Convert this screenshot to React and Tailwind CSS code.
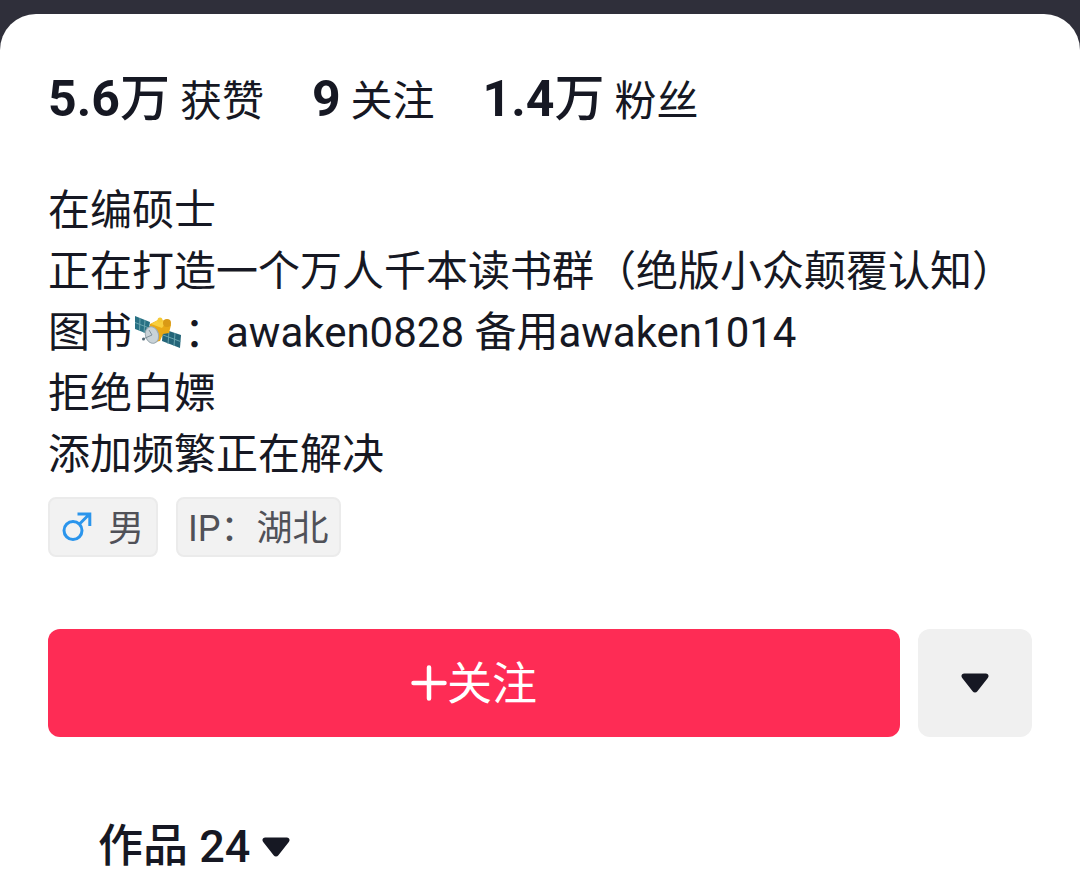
const stats = [
  { value: '5.6', unit: '万', label: '获赞' },
  { value: '9', unit: '', label: '关注' },
  { value: '1.4', unit: '万', label: '粉丝' },
]

function CaretDown() {
  return (
    <svg width="28" height="20" viewBox="0 0 28 20" fill="currentColor" aria-hidden="true">
      <path d="M3.2 0.5h21.6c2.4 0 3.6 2.6 2 4.4L16.4 18.2c-1.3 1.6-3.5 1.6-4.8 0L1.2 4.9C-.4 3.1.8.5 3.2.5z" />
    </svg>
  )
}

function MaleIcon() {
  return (
    <svg width="30" height="30" viewBox="0 0 30 30" fill="none" stroke="#2b95ec" strokeWidth="3" aria-hidden="true">
      <circle cx="11" cy="18.5" r="9" />
      <path d="M17.5 12L27 2.5M15.5 2h12.3v12" />
    </svg>
  )
}

function PlusIcon() {
  return (
    <svg width="36" height="36" viewBox="0 0 36 36" fill="none" stroke="currentColor" strokeWidth="4.5" strokeLinecap="round" aria-hidden="true">
      <path d="M18 2.5v31M2.5 18h31" />
    </svg>
  )
}

function Satellite() {
  return (
    <svg className="mx-px inline-block align-[-4px]" width="50" height="36" viewBox="0 0 50 36" role="img" aria-label="卫星">
      <path d="M14 11l22 12" stroke="#a8872d" strokeWidth="2" />
      {/* solar panels */}
      <path d="M2 1l15 6-2 12L2 14z" fill="#287184" />
      <path d="M2 7.5l14 5.5M7 3L6.5 16M12 5l-1 13" stroke="#6ba6b0" strokeWidth="1" fill="none" />
      <path d="M30 14l18 6-1 13-18-7z" fill="#246579" />
      <path d="M30 20l17.5 6.5M36 16l-1 13M42 18l-1 13" stroke="#6ba6b0" strokeWidth="1" fill="none" />
      {/* body */}
      <path d="M17 9l8-4 10 1 3 4-2 8-6 1-3 7-5 1-5-8z" fill="#e9a916" />
      <path d="M18 9l7-4 9 1-5 7z" fill="#f8cf3e" />
      <ellipse cx="34" cy="8" rx="4" ry="4" fill="#d99a16" />
      <circle cx="27" cy="5" r="2.5" fill="#f5ca35" />
      {/* dish */}
      <ellipse cx="19" cy="20" rx="6.5" ry="8.5" transform="rotate(-18 19 20)" fill="#c9d3d8" stroke="#9aa8af" strokeWidth="1" />
      <path d="M10 24l9-4M19 20l-3-5" stroke="#81919a" strokeWidth="1" />
      <circle cx="10.5" cy="24" r="1.5" fill="#526775" />
    </svg>
  )
}

function App() {
  return (
    <div className="bg-[#2f2f3a] pt-[14px] font-[Roboto,'Noto_Sans_CJK_SC',sans-serif] text-[#161823]" lang="zh-CN">
      <main className="rounded-t-[36px] bg-white px-12 pt-[50px] pb-4">
        <ul className="flex h-[72px] items-center gap-12">
          {stats.map((item) => (
            <li key={item.label} className="flex items-baseline gap-[10px] whitespace-nowrap">
              <strong className="text-[50px] leading-[72px] font-bold">
                {item.value}
                <span className="font-medium">{item.unit}</span>
              </strong>
              <span className="text-[42px] leading-[72px]">{item.label}</span>
            </li>
          ))}
        </ul>

        <section className="mt-11 text-[42px] leading-[61px]">
          <p>在编硕士</p>
          <p>正在打造一个万人千本读书群（绝版小众颠覆认知）</p>
          <p>图书<Satellite />：awaken0828 备用awaken1014</p>
          <p>拒绝白嫖</p>
          <p>添加频繁正在解决</p>
        </section>

        <div className="mt-3 flex gap-[18px] text-[36px] leading-[52px] text-[#505158]">
          <span className="flex items-center gap-4 rounded-lg border-2 border-[#ebebeb] bg-[#f2f2f2] px-3">
            <MaleIcon />
            <span className="pt-1">男</span>
          </span>
          <span className="rounded-lg border-2 border-[#ebebeb] bg-[#f2f2f2] px-[10px] pt-1">IP：湖北</span>
        </div>

        <div className="mt-18 flex gap-[18px]">
          <button type="button" className="flex h-[108px] flex-1 items-center justify-center rounded-xl bg-[#fe2c55] text-[45px] text-white">
            <PlusIcon />
            <span className="pt-1">关注</span>
          </button>
          <button type="button" aria-label="更多" className="flex h-[108px] w-[114px] items-center justify-center rounded-xl bg-[#f0f0f0]">
            <CaretDown />
          </button>
        </div>

        <div className="mt-[74px] pl-[50px]">
          <button type="button" className="flex items-center gap-3 text-[45px] leading-[72px] font-medium">
            作品 24
            <CaretDown />
          </button>
        </div>
      </main>
    </div>
  )
}

export default App
